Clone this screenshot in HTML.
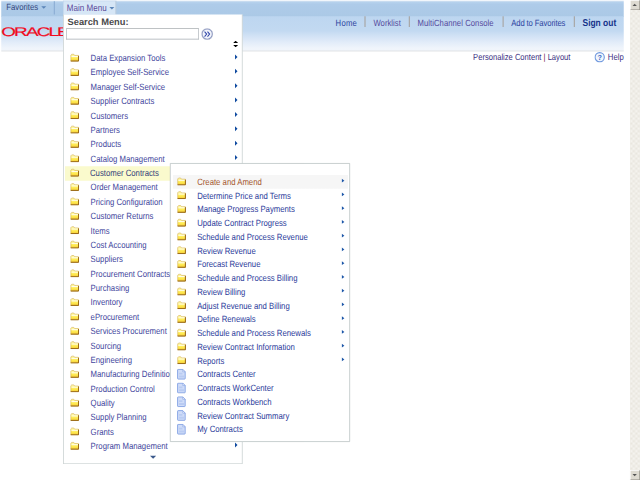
<!DOCTYPE html>
<html><head><meta charset="utf-8"><title>Main Menu</title>
<style>
html,body{margin:0;padding:0;background:#fff;overflow:hidden;width:640px;height:480px}
#s{text-rendering:geometricPrecision;position:absolute;left:0;top:0;width:1024px;height:768px;transform:scale(0.625) rotate(0.003deg);transform-origin:0 0;font-family:"Liberation Sans",sans-serif;font-size:12.4px;color:#41459c;overflow:hidden;background:#fff}
#s *{box-sizing:border-box}
.abs{position:absolute}
.t,.nl,.tx{display:inline-block;transform:scaleY(1.17)}
#topbar{left:2px;top:1px;width:996px;height:26px;background:linear-gradient(#c9dcf0 0,#c9dcf0 1.200px,#b4d0ec 3px,#aecbe9 6px,#abc9e6 100%)}
#hdr{left:2px;top:25.500px;width:996px;height:56px;background:linear-gradient(#bdd6f0 0%,#c2d9f1 42%,#d2e2f5 58%,#e2ecf9 76%,#eff4fb 92%,#f1f5fb 100%);border-bottom:1px solid #c4c8cc}
#fav{left:10px;top:4px;color:#34477d;white-space:nowrap;line-height:14px}
.dd{display:inline-block;width:0;height:0;border-left:4px solid transparent;border-right:4px solid transparent;border-top:4px solid #5b84b8;vertical-align:middle;margin-left:5px}
#sep1{left:86px;top:2px;width:2px;height:21px;background:#8fb0d6}
#mmtab{left:101px;top:1px;width:84.500px;height:22px;background:#d6e6f6;border:1px solid #bfd3ea;border-right:1.400px solid #a3b6c9;border-bottom:none;color:#5b4a9b;padding:3.700px 0 0 5px;white-space:nowrap;font-size:12.900px;line-height:14px}
#mmtab .dd{margin-left:4px}
#logo{left:1.500px;top:41.100px;color:#f00a1e;font-size:20px;letter-spacing:-1.950px;-webkit-text-stroke:0.300px #f00a1e;transform:scaleX(1.51);transform-origin:0 0;white-space:nowrap;line-height:22px}
.nl{top:29.800px;color:#2c44a0;white-space:nowrap;font-size:12.300px;line-height:14px}
.ns{top:25.800px;width:2px;height:17.500px;background:#a9a9a9}
#pers{top:84.500px;left:757px;color:#3a2f7f;white-space:nowrap;font-size:12.150px}
#help{top:84.500px;left:972.5px;color:#3a2f7f;white-space:nowrap}
#menu{left:101px;top:23px;width:287px;height:718.500px;background:#fff;border:1px solid #bcc6c6;border-top:none;overflow:hidden}
#sm{left:6px;top:5.200px;font-weight:bold;font-size:14.900px;transform:scaleY(1.0);color:#4a4a4a;white-space:nowrap}
#inp{left:3.5px;top:22px;width:212.300px;height:17.500px;border:1px solid #a5acb2;border-top-color:#7f858a;background:#fff}
.row{position:relative;height:23px;line-height:23px;white-space:nowrap}
.row .ic,.srow .ic{position:absolute;left:10px;top:1.500px;width:15px;height:15px}
.row .t{position:absolute;left:43px;top:0}
.row .ar,.srow .ar{position:absolute;top:7px;width:0;height:0;border-top:3.600px solid transparent;border-bottom:3.600px solid transparent;border-left:4.300px solid #1c56a8}
.row .ar{left:274.300px;top:4.800px;border-top-width:4.400px;border-bottom-width:4.400px;border-left-width:4.600px;border-left-color:#0f4aa0}
.row.hl{background:#fafacd;margin-left:2px;color:#33407a}
.row.hl .ic{left:8px}.row.hl .t{left:40px}
#rows{left:0;top:59.250px;width:285px}
#sub{left:272px;top:261px;width:287.800px;height:445.500px;background:#fff;border:1.300px solid #a8b3b3}
#srows{left:0.500px;top:18.250px;width:284.500px}
.srow{position:relative;height:22px;line-height:22px;white-space:nowrap;color:#2a3a9a}
.srow .ic{left:9px;top:1.500px}
.srow .dc{left:9px;top:2px;width:15px;height:17.500px}
.srow .t{position:absolute;left:42px;top:0}
.srow .ar{left:273px;top:5.600px}
.srow.hov{background:linear-gradient(90deg,#fff 0,#fff 2.500px,#f6f6f6 2.500px,#f6f6f6 calc(100% - 0.600px),#fff calc(100% - 0.600px));color:#a5562e}
#sb{left:1008px;top:0;width:16px;height:768px;background:#fff;background-image:conic-gradient(#e7e4dc 25%,#f7f6f2 0 50%,#e7e4dc 0 75%,#f7f6f2 0);background-size:2px 2px}
.sbb{left:0;width:16px;height:16px;background:#dedbd2;border:1px solid #fff;border-right-color:#8c8a82;border-bottom-color:#8c8a82}
</style></head><body>
<div id="s">
<svg width="0" height="0" style="position:absolute"><defs><linearGradient id="fg" x1="0" y1="0" x2="0" y2="1"><stop offset="0" stop-color="#fffbc0"/><stop offset="0.3" stop-color="#fff47e"/><stop offset="0.65" stop-color="#ffe94e"/><stop offset="1" stop-color="#f5cc3a"/></linearGradient></defs></svg>
<div class="abs" id="topbar"></div>
<div class="abs" id="hdr"></div>
<div class="abs" id="fav"><span class="tx">Favorites</span><span class="dd"></span></div>
<div class="abs" id="sep1"></div>
<div class="abs" id="mmtab"><span class="tx">Main Menu</span><span class="dd"></span></div>
<div class="abs" id="logo">ORACLE</div>
<div class="abs nl" style="left:537px;letter-spacing:0.350px">Home</div>
<div class="abs ns" style="left:583px"></div>
<div class="abs nl" style="left:597.500px;letter-spacing:0.050px;color:#54489c">Worklist</div>
<div class="abs ns" style="left:654px"></div>
<div class="abs nl" style="left:668px;letter-spacing:0.080px;color:#54489c">MultiChannel Console</div>
<div class="abs ns" style="left:804px"></div>
<div class="abs nl" style="left:818px;letter-spacing:-0.190px">Add to Favorites</div>
<div class="abs ns" style="left:918px"></div>
<div class="abs nl" style="left:932px;font-weight:bold;font-size:13.5px;top:29.900px;color:#16338a">Sign out</div>
<div class="abs tx" id="pers">Personalize Content <span style="color:#6a1840">|</span> Layout</div>
<div class="abs" id="help"><svg width="17" height="17" viewBox="0 0 17 17" style="position:absolute;left:-21.300px;top:-1.200px"><circle cx="8.500" cy="8.500" r="7.400" fill="#f1f6fd" stroke="#6f98de" stroke-width="1.800"/><text x="8.500" y="12.600" font-size="11.500" font-weight="bold" text-anchor="middle" fill="#3f6cc4" font-family="Liberation Sans,sans-serif">?</text></svg><span class="tx">Help</span></div>
<div class="abs" id="menu">
<div class="abs" id="sm">Search Menu:</div>
<div class="abs" id="inp"></div>
<svg class="abs" style="left:220px;top:21.500px" width="19" height="19" viewBox="0 0 19 19"><circle cx="9.500" cy="9.500" r="8.300" fill="#f3f5fb" stroke="#8c98c2" stroke-width="1.900"/><circle cx="9.500" cy="9.500" r="9.200" fill="none" stroke="#c9ccd6" stroke-width="0.600"/><path d="M5.300 5.500l3.400 4-3.400 4M10 5.500l3.400 4-3.400 4" fill="none" stroke="#2f45a8" stroke-width="1.600"/></svg>
<svg class="abs" style="left:270.800px;top:42px" width="8" height="11" viewBox="0 0 8 11"><path d="M4 0l4 3.800h-8zM0 6.800h8l-4 3.800z" fill="#000"/></svg>
<div class="abs" id="rows">
<div class="row"><svg class="ic" viewBox="0 0 16 16"><path d="M1.500 14.500v-10l1.500-1.500h3.500l1.500 2h6.500v9.500z" fill="url(#fg)" stroke="#d2ac4c" stroke-width="1"/><path d="M2.500 6.900h11" stroke="#fffef2" stroke-width="1.700"/><path d="M1.200 14.600h13.400v-8.800" fill="none" stroke="#94620f" stroke-width="1.600"/></svg><span class="t">Data Expansion Tools</span><i class="ar"></i></div>
<div class="row"><svg class="ic" viewBox="0 0 16 16"><path d="M1.500 14.500v-10l1.500-1.500h3.500l1.500 2h6.500v9.500z" fill="url(#fg)" stroke="#d2ac4c" stroke-width="1"/><path d="M2.500 6.900h11" stroke="#fffef2" stroke-width="1.700"/><path d="M1.200 14.600h13.400v-8.800" fill="none" stroke="#94620f" stroke-width="1.600"/></svg><span class="t">Employee Self-Service</span><i class="ar"></i></div>
<div class="row"><svg class="ic" viewBox="0 0 16 16"><path d="M1.500 14.500v-10l1.500-1.500h3.500l1.500 2h6.500v9.500z" fill="url(#fg)" stroke="#d2ac4c" stroke-width="1"/><path d="M2.500 6.900h11" stroke="#fffef2" stroke-width="1.700"/><path d="M1.200 14.600h13.400v-8.800" fill="none" stroke="#94620f" stroke-width="1.600"/></svg><span class="t">Manager Self-Service</span><i class="ar"></i></div>
<div class="row"><svg class="ic" viewBox="0 0 16 16"><path d="M1.500 14.500v-10l1.500-1.500h3.500l1.500 2h6.500v9.500z" fill="url(#fg)" stroke="#d2ac4c" stroke-width="1"/><path d="M2.500 6.900h11" stroke="#fffef2" stroke-width="1.700"/><path d="M1.200 14.600h13.400v-8.800" fill="none" stroke="#94620f" stroke-width="1.600"/></svg><span class="t">Supplier Contracts</span><i class="ar"></i></div>
<div class="row"><svg class="ic" viewBox="0 0 16 16"><path d="M1.500 14.500v-10l1.500-1.500h3.500l1.500 2h6.500v9.500z" fill="url(#fg)" stroke="#d2ac4c" stroke-width="1"/><path d="M2.500 6.900h11" stroke="#fffef2" stroke-width="1.700"/><path d="M1.200 14.600h13.400v-8.800" fill="none" stroke="#94620f" stroke-width="1.600"/></svg><span class="t">Customers</span><i class="ar"></i></div>
<div class="row"><svg class="ic" viewBox="0 0 16 16"><path d="M1.500 14.500v-10l1.500-1.500h3.500l1.500 2h6.500v9.500z" fill="url(#fg)" stroke="#d2ac4c" stroke-width="1"/><path d="M2.500 6.900h11" stroke="#fffef2" stroke-width="1.700"/><path d="M1.200 14.600h13.400v-8.800" fill="none" stroke="#94620f" stroke-width="1.600"/></svg><span class="t">Partners</span><i class="ar"></i></div>
<div class="row"><svg class="ic" viewBox="0 0 16 16"><path d="M1.500 14.500v-10l1.500-1.500h3.500l1.500 2h6.500v9.500z" fill="url(#fg)" stroke="#d2ac4c" stroke-width="1"/><path d="M2.500 6.900h11" stroke="#fffef2" stroke-width="1.700"/><path d="M1.200 14.600h13.400v-8.800" fill="none" stroke="#94620f" stroke-width="1.600"/></svg><span class="t">Products</span><i class="ar"></i></div>
<div class="row"><svg class="ic" viewBox="0 0 16 16"><path d="M1.500 14.500v-10l1.500-1.500h3.500l1.500 2h6.500v9.500z" fill="url(#fg)" stroke="#d2ac4c" stroke-width="1"/><path d="M2.500 6.900h11" stroke="#fffef2" stroke-width="1.700"/><path d="M1.200 14.600h13.400v-8.800" fill="none" stroke="#94620f" stroke-width="1.600"/></svg><span class="t">Catalog Management</span><i class="ar"></i></div>
<div class="row hl"><svg class="ic" viewBox="0 0 16 16"><path d="M1.500 14.500v-10l1.500-1.500h3.500l1.500 2h6.500v9.500z" fill="url(#fg)" stroke="#d2ac4c" stroke-width="1"/><path d="M2.500 6.900h11" stroke="#fffef2" stroke-width="1.700"/><path d="M1.200 14.600h13.400v-8.800" fill="none" stroke="#94620f" stroke-width="1.600"/></svg><span class="t">Customer Contracts</span></div>
<div class="row"><svg class="ic" viewBox="0 0 16 16"><path d="M1.500 14.500v-10l1.500-1.500h3.500l1.500 2h6.500v9.500z" fill="url(#fg)" stroke="#d2ac4c" stroke-width="1"/><path d="M2.500 6.900h11" stroke="#fffef2" stroke-width="1.700"/><path d="M1.200 14.600h13.400v-8.800" fill="none" stroke="#94620f" stroke-width="1.600"/></svg><span class="t">Order Management</span><i class="ar"></i></div>
<div class="row"><svg class="ic" viewBox="0 0 16 16"><path d="M1.500 14.500v-10l1.500-1.500h3.500l1.500 2h6.500v9.500z" fill="url(#fg)" stroke="#d2ac4c" stroke-width="1"/><path d="M2.500 6.900h11" stroke="#fffef2" stroke-width="1.700"/><path d="M1.200 14.600h13.400v-8.800" fill="none" stroke="#94620f" stroke-width="1.600"/></svg><span class="t">Pricing Configuration</span><i class="ar"></i></div>
<div class="row"><svg class="ic" viewBox="0 0 16 16"><path d="M1.500 14.500v-10l1.500-1.500h3.500l1.500 2h6.500v9.500z" fill="url(#fg)" stroke="#d2ac4c" stroke-width="1"/><path d="M2.500 6.900h11" stroke="#fffef2" stroke-width="1.700"/><path d="M1.200 14.600h13.400v-8.800" fill="none" stroke="#94620f" stroke-width="1.600"/></svg><span class="t">Customer Returns</span><i class="ar"></i></div>
<div class="row"><svg class="ic" viewBox="0 0 16 16"><path d="M1.500 14.500v-10l1.500-1.500h3.500l1.500 2h6.500v9.500z" fill="url(#fg)" stroke="#d2ac4c" stroke-width="1"/><path d="M2.500 6.900h11" stroke="#fffef2" stroke-width="1.700"/><path d="M1.200 14.600h13.400v-8.800" fill="none" stroke="#94620f" stroke-width="1.600"/></svg><span class="t">Items</span><i class="ar"></i></div>
<div class="row"><svg class="ic" viewBox="0 0 16 16"><path d="M1.500 14.500v-10l1.500-1.500h3.500l1.500 2h6.500v9.500z" fill="url(#fg)" stroke="#d2ac4c" stroke-width="1"/><path d="M2.500 6.900h11" stroke="#fffef2" stroke-width="1.700"/><path d="M1.200 14.600h13.400v-8.800" fill="none" stroke="#94620f" stroke-width="1.600"/></svg><span class="t">Cost Accounting</span><i class="ar"></i></div>
<div class="row"><svg class="ic" viewBox="0 0 16 16"><path d="M1.500 14.500v-10l1.500-1.500h3.500l1.500 2h6.500v9.500z" fill="url(#fg)" stroke="#d2ac4c" stroke-width="1"/><path d="M2.500 6.900h11" stroke="#fffef2" stroke-width="1.700"/><path d="M1.200 14.600h13.400v-8.800" fill="none" stroke="#94620f" stroke-width="1.600"/></svg><span class="t">Suppliers</span><i class="ar"></i></div>
<div class="row"><svg class="ic" viewBox="0 0 16 16"><path d="M1.500 14.500v-10l1.500-1.500h3.500l1.500 2h6.500v9.500z" fill="url(#fg)" stroke="#d2ac4c" stroke-width="1"/><path d="M2.500 6.900h11" stroke="#fffef2" stroke-width="1.700"/><path d="M1.200 14.600h13.400v-8.800" fill="none" stroke="#94620f" stroke-width="1.600"/></svg><span class="t">Procurement Contracts</span><i class="ar"></i></div>
<div class="row"><svg class="ic" viewBox="0 0 16 16"><path d="M1.500 14.500v-10l1.500-1.500h3.500l1.500 2h6.500v9.500z" fill="url(#fg)" stroke="#d2ac4c" stroke-width="1"/><path d="M2.500 6.900h11" stroke="#fffef2" stroke-width="1.700"/><path d="M1.200 14.600h13.400v-8.800" fill="none" stroke="#94620f" stroke-width="1.600"/></svg><span class="t">Purchasing</span><i class="ar"></i></div>
<div class="row"><svg class="ic" viewBox="0 0 16 16"><path d="M1.500 14.500v-10l1.500-1.500h3.500l1.500 2h6.500v9.500z" fill="url(#fg)" stroke="#d2ac4c" stroke-width="1"/><path d="M2.500 6.900h11" stroke="#fffef2" stroke-width="1.700"/><path d="M1.200 14.600h13.400v-8.800" fill="none" stroke="#94620f" stroke-width="1.600"/></svg><span class="t">Inventory</span><i class="ar"></i></div>
<div class="row"><svg class="ic" viewBox="0 0 16 16"><path d="M1.500 14.500v-10l1.500-1.500h3.500l1.500 2h6.500v9.500z" fill="url(#fg)" stroke="#d2ac4c" stroke-width="1"/><path d="M2.500 6.900h11" stroke="#fffef2" stroke-width="1.700"/><path d="M1.200 14.600h13.400v-8.800" fill="none" stroke="#94620f" stroke-width="1.600"/></svg><span class="t">eProcurement</span><i class="ar"></i></div>
<div class="row"><svg class="ic" viewBox="0 0 16 16"><path d="M1.500 14.500v-10l1.500-1.500h3.500l1.500 2h6.500v9.500z" fill="url(#fg)" stroke="#d2ac4c" stroke-width="1"/><path d="M2.500 6.900h11" stroke="#fffef2" stroke-width="1.700"/><path d="M1.200 14.600h13.400v-8.800" fill="none" stroke="#94620f" stroke-width="1.600"/></svg><span class="t">Services Procurement</span><i class="ar"></i></div>
<div class="row"><svg class="ic" viewBox="0 0 16 16"><path d="M1.500 14.500v-10l1.500-1.500h3.500l1.500 2h6.500v9.500z" fill="url(#fg)" stroke="#d2ac4c" stroke-width="1"/><path d="M2.500 6.900h11" stroke="#fffef2" stroke-width="1.700"/><path d="M1.200 14.600h13.400v-8.800" fill="none" stroke="#94620f" stroke-width="1.600"/></svg><span class="t">Sourcing</span><i class="ar"></i></div>
<div class="row"><svg class="ic" viewBox="0 0 16 16"><path d="M1.500 14.500v-10l1.500-1.500h3.500l1.500 2h6.500v9.500z" fill="url(#fg)" stroke="#d2ac4c" stroke-width="1"/><path d="M2.500 6.900h11" stroke="#fffef2" stroke-width="1.700"/><path d="M1.200 14.600h13.400v-8.800" fill="none" stroke="#94620f" stroke-width="1.600"/></svg><span class="t">Engineering</span><i class="ar"></i></div>
<div class="row"><svg class="ic" viewBox="0 0 16 16"><path d="M1.500 14.500v-10l1.500-1.500h3.500l1.500 2h6.500v9.500z" fill="url(#fg)" stroke="#d2ac4c" stroke-width="1"/><path d="M2.500 6.900h11" stroke="#fffef2" stroke-width="1.700"/><path d="M1.200 14.600h13.400v-8.800" fill="none" stroke="#94620f" stroke-width="1.600"/></svg><span class="t">Manufacturing Definitions</span><i class="ar"></i></div>
<div class="row"><svg class="ic" viewBox="0 0 16 16"><path d="M1.500 14.500v-10l1.500-1.500h3.500l1.500 2h6.500v9.500z" fill="url(#fg)" stroke="#d2ac4c" stroke-width="1"/><path d="M2.500 6.900h11" stroke="#fffef2" stroke-width="1.700"/><path d="M1.200 14.600h13.400v-8.800" fill="none" stroke="#94620f" stroke-width="1.600"/></svg><span class="t">Production Control</span><i class="ar"></i></div>
<div class="row"><svg class="ic" viewBox="0 0 16 16"><path d="M1.500 14.500v-10l1.500-1.500h3.500l1.500 2h6.500v9.500z" fill="url(#fg)" stroke="#d2ac4c" stroke-width="1"/><path d="M2.500 6.900h11" stroke="#fffef2" stroke-width="1.700"/><path d="M1.200 14.600h13.400v-8.800" fill="none" stroke="#94620f" stroke-width="1.600"/></svg><span class="t">Quality</span><i class="ar"></i></div>
<div class="row"><svg class="ic" viewBox="0 0 16 16"><path d="M1.500 14.500v-10l1.500-1.500h3.500l1.500 2h6.500v9.500z" fill="url(#fg)" stroke="#d2ac4c" stroke-width="1"/><path d="M2.500 6.900h11" stroke="#fffef2" stroke-width="1.700"/><path d="M1.200 14.600h13.400v-8.800" fill="none" stroke="#94620f" stroke-width="1.600"/></svg><span class="t">Supply Planning</span><i class="ar"></i></div>
<div class="row"><svg class="ic" viewBox="0 0 16 16"><path d="M1.500 14.500v-10l1.500-1.500h3.500l1.500 2h6.500v9.500z" fill="url(#fg)" stroke="#d2ac4c" stroke-width="1"/><path d="M2.500 6.900h11" stroke="#fffef2" stroke-width="1.700"/><path d="M1.200 14.600h13.400v-8.800" fill="none" stroke="#94620f" stroke-width="1.600"/></svg><span class="t">Grants</span><i class="ar"></i></div>
<div class="row"><svg class="ic" viewBox="0 0 16 16"><path d="M1.500 14.500v-10l1.500-1.500h3.500l1.500 2h6.500v9.500z" fill="url(#fg)" stroke="#d2ac4c" stroke-width="1"/><path d="M2.500 6.900h11" stroke="#fffef2" stroke-width="1.700"/><path d="M1.200 14.600h13.400v-8.800" fill="none" stroke="#94620f" stroke-width="1.600"/></svg><span class="t">Program Management</span><i class="ar"></i></div>
</div>
<div class="abs" style="left:138px;top:706px;width:0;height:0;border-left:5.300px solid transparent;border-right:5.300px solid transparent;border-top:5.600px solid #3c5a8c"></div>
</div>
<div class="abs" id="sub">
<div class="abs" id="srows">
<div class="srow hov"><svg class="ic" viewBox="0 0 16 16"><path d="M1.500 14.500v-10l1.500-1.500h3.500l1.500 2h6.500v9.500z" fill="url(#fg)" stroke="#d2ac4c" stroke-width="1"/><path d="M2.500 6.900h11" stroke="#fffef2" stroke-width="1.700"/><path d="M1.200 14.600h13.400v-8.800" fill="none" stroke="#94620f" stroke-width="1.600"/></svg><span class="t">Create and Amend</span><i class=ar></i></div>
<div class="srow"><svg class="ic" viewBox="0 0 16 16"><path d="M1.500 14.500v-10l1.500-1.500h3.500l1.500 2h6.500v9.500z" fill="url(#fg)" stroke="#d2ac4c" stroke-width="1"/><path d="M2.500 6.900h11" stroke="#fffef2" stroke-width="1.700"/><path d="M1.200 14.600h13.400v-8.800" fill="none" stroke="#94620f" stroke-width="1.600"/></svg><span class="t">Determine Price and Terms</span><i class=ar></i></div>
<div class="srow"><svg class="ic" viewBox="0 0 16 16"><path d="M1.500 14.500v-10l1.500-1.500h3.500l1.500 2h6.500v9.500z" fill="url(#fg)" stroke="#d2ac4c" stroke-width="1"/><path d="M2.500 6.900h11" stroke="#fffef2" stroke-width="1.700"/><path d="M1.200 14.600h13.400v-8.800" fill="none" stroke="#94620f" stroke-width="1.600"/></svg><span class="t">Manage Progress Payments</span><i class=ar></i></div>
<div class="srow"><svg class="ic" viewBox="0 0 16 16"><path d="M1.500 14.500v-10l1.500-1.500h3.500l1.500 2h6.500v9.500z" fill="url(#fg)" stroke="#d2ac4c" stroke-width="1"/><path d="M2.500 6.900h11" stroke="#fffef2" stroke-width="1.700"/><path d="M1.200 14.600h13.400v-8.800" fill="none" stroke="#94620f" stroke-width="1.600"/></svg><span class="t">Update Contract Progress</span><i class=ar></i></div>
<div class="srow"><svg class="ic" viewBox="0 0 16 16"><path d="M1.500 14.500v-10l1.500-1.500h3.500l1.500 2h6.500v9.500z" fill="url(#fg)" stroke="#d2ac4c" stroke-width="1"/><path d="M2.500 6.900h11" stroke="#fffef2" stroke-width="1.700"/><path d="M1.200 14.600h13.400v-8.800" fill="none" stroke="#94620f" stroke-width="1.600"/></svg><span class="t">Schedule and Process Revenue</span><i class=ar></i></div>
<div class="srow"><svg class="ic" viewBox="0 0 16 16"><path d="M1.500 14.500v-10l1.500-1.500h3.500l1.500 2h6.500v9.500z" fill="url(#fg)" stroke="#d2ac4c" stroke-width="1"/><path d="M2.500 6.900h11" stroke="#fffef2" stroke-width="1.700"/><path d="M1.200 14.600h13.400v-8.800" fill="none" stroke="#94620f" stroke-width="1.600"/></svg><span class="t">Review Revenue</span><i class=ar></i></div>
<div class="srow"><svg class="ic" viewBox="0 0 16 16"><path d="M1.500 14.500v-10l1.500-1.500h3.500l1.500 2h6.500v9.500z" fill="url(#fg)" stroke="#d2ac4c" stroke-width="1"/><path d="M2.500 6.900h11" stroke="#fffef2" stroke-width="1.700"/><path d="M1.200 14.600h13.400v-8.800" fill="none" stroke="#94620f" stroke-width="1.600"/></svg><span class="t">Forecast Revenue</span><i class=ar></i></div>
<div class="srow"><svg class="ic" viewBox="0 0 16 16"><path d="M1.500 14.500v-10l1.500-1.500h3.500l1.500 2h6.500v9.500z" fill="url(#fg)" stroke="#d2ac4c" stroke-width="1"/><path d="M2.500 6.900h11" stroke="#fffef2" stroke-width="1.700"/><path d="M1.200 14.600h13.400v-8.800" fill="none" stroke="#94620f" stroke-width="1.600"/></svg><span class="t">Schedule and Process Billing</span><i class=ar></i></div>
<div class="srow"><svg class="ic" viewBox="0 0 16 16"><path d="M1.500 14.500v-10l1.500-1.500h3.500l1.500 2h6.500v9.500z" fill="url(#fg)" stroke="#d2ac4c" stroke-width="1"/><path d="M2.500 6.900h11" stroke="#fffef2" stroke-width="1.700"/><path d="M1.200 14.600h13.400v-8.800" fill="none" stroke="#94620f" stroke-width="1.600"/></svg><span class="t">Review Billing</span><i class=ar></i></div>
<div class="srow"><svg class="ic" viewBox="0 0 16 16"><path d="M1.500 14.500v-10l1.500-1.500h3.500l1.500 2h6.500v9.500z" fill="url(#fg)" stroke="#d2ac4c" stroke-width="1"/><path d="M2.500 6.900h11" stroke="#fffef2" stroke-width="1.700"/><path d="M1.200 14.600h13.400v-8.800" fill="none" stroke="#94620f" stroke-width="1.600"/></svg><span class="t">Adjust Revenue and Billing</span><i class=ar></i></div>
<div class="srow"><svg class="ic" viewBox="0 0 16 16"><path d="M1.500 14.500v-10l1.500-1.500h3.500l1.500 2h6.500v9.500z" fill="url(#fg)" stroke="#d2ac4c" stroke-width="1"/><path d="M2.500 6.900h11" stroke="#fffef2" stroke-width="1.700"/><path d="M1.200 14.600h13.400v-8.800" fill="none" stroke="#94620f" stroke-width="1.600"/></svg><span class="t">Define Renewals</span><i class=ar></i></div>
<div class="srow"><svg class="ic" viewBox="0 0 16 16"><path d="M1.500 14.500v-10l1.500-1.500h3.500l1.500 2h6.500v9.500z" fill="url(#fg)" stroke="#d2ac4c" stroke-width="1"/><path d="M2.500 6.900h11" stroke="#fffef2" stroke-width="1.700"/><path d="M1.200 14.600h13.400v-8.800" fill="none" stroke="#94620f" stroke-width="1.600"/></svg><span class="t">Schedule and Process Renewals</span><i class=ar></i></div>
<div class="srow"><svg class="ic" viewBox="0 0 16 16"><path d="M1.500 14.500v-10l1.500-1.500h3.500l1.500 2h6.500v9.500z" fill="url(#fg)" stroke="#d2ac4c" stroke-width="1"/><path d="M2.500 6.900h11" stroke="#fffef2" stroke-width="1.700"/><path d="M1.200 14.600h13.400v-8.800" fill="none" stroke="#94620f" stroke-width="1.600"/></svg><span class="t">Review Contract Information</span><i class=ar></i></div>
<div class="srow"><svg class="ic" viewBox="0 0 16 16"><path d="M1.500 14.500v-10l1.500-1.500h3.500l1.500 2h6.500v9.500z" fill="url(#fg)" stroke="#d2ac4c" stroke-width="1"/><path d="M2.500 6.900h11" stroke="#fffef2" stroke-width="1.700"/><path d="M1.200 14.600h13.400v-8.800" fill="none" stroke="#94620f" stroke-width="1.600"/></svg><span class="t">Reports</span><i class=ar></i></div>
<div class="srow"><svg class="ic dc" viewBox="0 0 15 18"><path d="M2 1h7.500l4 4v11a1 1 0 0 1-1 1h-10.500a1 1 0 0 1-1-1v-14a1 1 0 0 1 1-1z" fill="#cfdcf8" stroke="#7b9ce2" stroke-width="1.400"/><path d="M3.500 6.500h5.500v3h-5.500zM3.500 11h8v3.500h-8z" fill="#b9cbf2"/><path d="M9.500 1.200v3.800h3.800z" fill="#fff" stroke="#7b9ce2" stroke-width="0.900"/></svg><span class="t">Contracts Center</span></div>
<div class="srow"><svg class="ic dc" viewBox="0 0 15 18"><path d="M2 1h7.500l4 4v11a1 1 0 0 1-1 1h-10.500a1 1 0 0 1-1-1v-14a1 1 0 0 1 1-1z" fill="#cfdcf8" stroke="#7b9ce2" stroke-width="1.400"/><path d="M3.500 6.500h5.500v3h-5.500zM3.500 11h8v3.500h-8z" fill="#b9cbf2"/><path d="M9.500 1.200v3.800h3.800z" fill="#fff" stroke="#7b9ce2" stroke-width="0.900"/></svg><span class="t">Contracts WorkCenter</span></div>
<div class="srow"><svg class="ic dc" viewBox="0 0 15 18"><path d="M2 1h7.500l4 4v11a1 1 0 0 1-1 1h-10.500a1 1 0 0 1-1-1v-14a1 1 0 0 1 1-1z" fill="#cfdcf8" stroke="#7b9ce2" stroke-width="1.400"/><path d="M3.500 6.500h5.500v3h-5.500zM3.500 11h8v3.500h-8z" fill="#b9cbf2"/><path d="M9.500 1.200v3.800h3.800z" fill="#fff" stroke="#7b9ce2" stroke-width="0.900"/></svg><span class="t">Contracts Workbench</span></div>
<div class="srow"><svg class="ic dc" viewBox="0 0 15 18"><path d="M2 1h7.500l4 4v11a1 1 0 0 1-1 1h-10.500a1 1 0 0 1-1-1v-14a1 1 0 0 1 1-1z" fill="#cfdcf8" stroke="#7b9ce2" stroke-width="1.400"/><path d="M3.500 6.500h5.500v3h-5.500zM3.500 11h8v3.500h-8z" fill="#b9cbf2"/><path d="M9.500 1.200v3.800h3.800z" fill="#fff" stroke="#7b9ce2" stroke-width="0.900"/></svg><span class="t">Review Contract Summary</span></div>
<div class="srow"><svg class="ic dc" viewBox="0 0 15 18"><path d="M2 1h7.500l4 4v11a1 1 0 0 1-1 1h-10.500a1 1 0 0 1-1-1v-14a1 1 0 0 1 1-1z" fill="#cfdcf8" stroke="#7b9ce2" stroke-width="1.400"/><path d="M3.500 6.500h5.500v3h-5.500zM3.500 11h8v3.500h-8z" fill="#b9cbf2"/><path d="M9.500 1.200v3.800h3.800z" fill="#fff" stroke="#7b9ce2" stroke-width="0.900"/></svg><span class="t">My Contracts</span></div>
</div>
</div>
<div class="abs" id="sb">
<div class="abs sbb" style="top:0"><svg width="14" height="14" viewBox="0 0 14 14" style="display:block"><path d="M3 8.500l3.500-3.500 3.500 3.500z" fill="#555"/></svg></div>
<div class="abs sbb" style="top:752px"><svg width="14" height="14" viewBox="0 0 14 14" style="display:block"><path d="M3 5.500l3.500 3.500 3.500-3.500z" fill="#555"/></svg></div>
</div>
</div>
</body></html>
